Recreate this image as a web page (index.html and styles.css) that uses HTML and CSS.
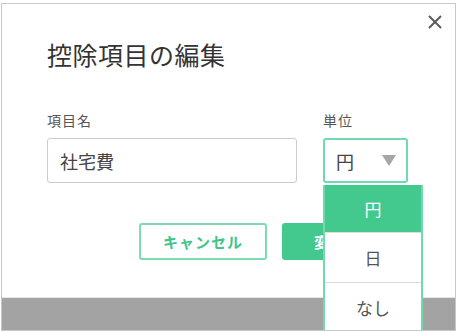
FILE: index.html
```html
<!DOCTYPE html>
<html lang="ja">
<head>
    <meta charset="UTF-8">
    <meta name="viewport" content="width=device-width, initial-scale=1.0">
    <title>控除項目の編集</title>
    <link rel="stylesheet" href="styles.css">
</head>
<body>
<div class="frame">
    <div class="modal">
        <button class="close" type="button" aria-label="閉じる">
            <svg width="14" height="14" viewBox="0 0 14 14">
                <path d="M1 1 L13 13 M13 1 L1 13" stroke="#5a5a5a" stroke-width="2" fill="none"/>
            </svg>
        </button>
        <h1 class="title">控除項目の編集</h1>
        <form class="fields">
            <div class="field field-name">
                <label class="label" for="itemName">項目名</label>
                <input class="text-input" type="text" id="itemName" value="社宅費">
            </div>
            <div class="field field-unit">
                <span class="label">単位</span>
                <div class="select">
                    <span class="select-value">円</span>
                    <span class="caret"></span>
                    <ul class="dropdown">
                        <li class="option selected">円</li>
                        <li class="option">日</li>
                        <li class="option">なし</li>
                    </ul>
                </div>
            </div>
        </form>
        <div class="actions">
            <button class="btn btn-outline" type="button">キャンセル</button>
            <button class="btn btn-primary" type="button">変更する</button>
        </div>
    </div>
    <div class="backdrop"></div>
</div>
</body>
</html>
```

FILE: styles.css
```css
body {
    margin: 0;
    background-color: #ffffff;
    font-family: "Noto Sans CJK JP", "Noto Sans", sans-serif;
    color: #333333;
}

.frame {
    display: flex;
    flex-direction: column;
    box-sizing: border-box;
    width: 455px;
    height: 328px;
    margin: 3px 0 0 1px;
    border: 1px solid #c8c8c8;
    overflow: hidden;
}

.modal {
    position: relative;
    height: 293px;
    padding: 0 45px 0 45px;
    background-color: #ffffff;
    border-bottom: 1px solid #e6e6e6;
}

.close {
    position: absolute;
    top: 11px;
    right: 13px;
    padding: 0;
    border: none;
    background: none;
    line-height: 0;
    cursor: pointer;
}

.title {
    margin: 0;
    padding-top: 34px;
    font-size: 25px;
    font-weight: normal;
    line-height: 32px;
    letter-spacing: 0.5px;
    color: #333333;
}

.fields {
    display: flex;
    gap: 26px;
    margin-top: 40px;
}

.field {
    display: flex;
    flex-direction: column;
}

.field-name {
    width: 250px;
}

.field-unit {
    width: 85px;
}

.label {
    font-size: 14px;
    line-height: 20px;
    letter-spacing: 1px;
    color: #555555;
    margin-bottom: 8px;
}

.text-input {
    box-sizing: border-box;
    width: 100%;
    height: 45px;
    padding: 0 12px;
    border: 1px solid #cccccc;
    border-radius: 3px;
    font-family: inherit;
    font-size: 18px;
    color: #444444;
}

.select {
    position: relative;
    display: flex;
    align-items: center;
    justify-content: space-between;
    box-sizing: border-box;
    height: 45px;
    padding: 0 10px 0 11px;
    border: 2px solid #72d8ae;
    border-radius: 3px;
    font-size: 18px;
    color: #444444;
}

.caret {
    width: 0;
    height: 0;
    border-left: 7px solid transparent;
    border-right: 7px solid transparent;
    border-top: 11px solid #a6a6a6;
}

.dropdown {
    position: absolute;
    top: 45px;
    left: -2px;
    box-sizing: border-box;
    width: 100px;
    margin: 0;
    padding: 0;
    list-style: none;
    border-left: 2px solid #72d8ae;
    border-right: 2px solid #72d8ae;
    background-color: #ffffff;
    z-index: 2;
}

.option {
    height: 49px;
    line-height: 49px;
    text-align: center;
    font-size: 17px;
    color: #555555;
    border-top: 1px solid #dddddd;
}

.option.selected {
    height: 47px;
    line-height: 47px;
    border-top: none;
    background-color: #43c98d;
    color: #ffffff;
}

.actions {
    display: flex;
    justify-content: flex-end;
    gap: 15px;
    margin-top: 40px;
}

.btn {
    box-sizing: border-box;
    width: 128px;
    height: 37px;
    border-radius: 3px;
    font-family: inherit;
    font-size: 15px;
    font-weight: bold;
    letter-spacing: 1px;
    cursor: pointer;
}

.btn-outline {
    border: 2px solid #7bdcb4;
    background-color: #ffffff;
    color: #3fc58a;
}

.btn-primary {
    border: none;
    background-color: #43c98d;
    color: #ffffff;
}

.backdrop {
    flex: 1;
    background-color: #a3a3a3;
}
```
